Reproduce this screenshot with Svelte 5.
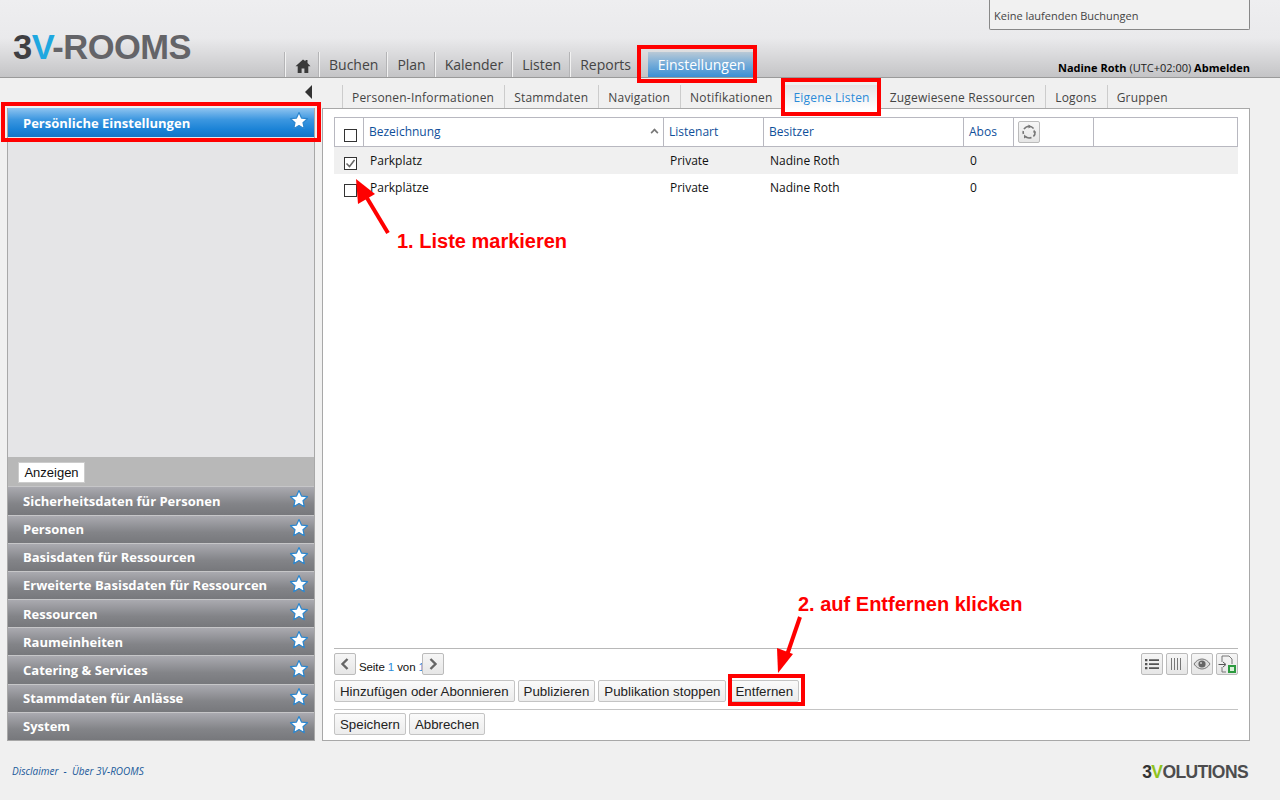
<script>
  const navItems = ['Buchen', 'Plan', 'Kalender', 'Listen', 'Reports'];
  const tabs = ['Personen-Informationen', 'Stammdaten', 'Navigation', 'Notifikationen', 'Eigene Listen', 'Zugewiesene Ressourcen', 'Logons', 'Gruppen'];
  const groups = ['Sicherheitsdaten für Personen', 'Personen', 'Basisdaten für Ressourcen', 'Erweiterte Basisdaten für Ressourcen', 'Ressourcen', 'Raumeinheiten', 'Catering & Services', 'Stammdaten für Anlässe', 'System'];
  const rows = [
    { name: 'Parkplatz', type: 'Private', owner: 'Nadine Roth', subs: 0, checked: true },
    { name: 'Parkplätze', type: 'Private', owner: 'Nadine Roth', subs: 0, checked: false }
  ];
  const actions = ['Hinzufügen oder Abonnieren', 'Publizieren', 'Publikation stoppen', 'Entfernen'];
</script>

{#snippet star()}
  <svg class="star" width="20" height="20" viewBox="0 0 20 20">
    <path d="M10 1.5l2.5 5.6 6 .6-4.5 4 1.3 6L10 14.6l-5.3 3.1 1.3-6-4.5-4 6-.6z" fill="#fff" stroke="#2a86cf" stroke-width="1.2" stroke-linejoin="round" />
  </svg>
{/snippet}

<div class="page">
  <header>
    <div class="running">Keine laufenden Buchungen</div>
    <div class="bar">
      <div class="logo"><span class="logo-mark">3<span class="logo-v">V</span></span>-ROOMS</div>
      <nav>
        <span class="nav-item home">
          <svg width="16" height="14" viewBox="0 0 16 14"><path d="M8 0.5L0.5 7.2h2.2V14h3.9V9.5h2.8V14h3.9V7.2h2.2L12.5 4V1h-2v1.2z" fill="#3a3a3a" /></svg>
        </span>
        {#each navItems as item}
          <span class="nav-item">{item}</span>
        {/each}
        <span class="nav-active">Einstellungen</span>
      </nav>
      <div class="user"><b>Nadine Roth</b> (UTC+02:00) <b>Abmelden</b></div>
    </div>
  </header>

  <main>
    <aside>
      <div class="collapse"><span class="collapse-arrow"></span></div>
      <div class="side-panel">
        <div class="side-active">Persönliche Einstellungen {@render star()}</div>
        <div class="side-fill"></div>
        <div class="side-show"><button class="show-btn">Anzeigen</button></div>
        {#each groups as group}
          <div class="side-group">{group} {@render star()}</div>
        {/each}
      </div>
    </aside>

    <section>
      <div class="tabs">
        {#each tabs as tab}
          <span class="tab" class:active={tab === 'Eigene Listen'}>{tab}</span>
        {/each}
      </div>
      <div class="panel">
        <div class="table">
          <div class="row head">
            <div class="cell check"><span class="box"></span></div>
            <div class="cell name">Bezeichnung <span class="sort"></span></div>
            <div class="cell type">Listenart</div>
            <div class="cell owner">Besitzer</div>
            <div class="cell subs">Abos</div>
            <div class="cell tool">
              <span class="icon-btn refresh">
                <svg width="16" height="16" viewBox="0 0 16 16" fill="none" stroke="#777" stroke-width="1.6">
                  <path d="M3 5.2A6 6 0 0 1 8 2.2a6 6 0 0 1 4.6 2.2M14 7.5a6 6 0 0 1-1.6 5M10.5 13.4a6 6 0 0 1-6.5-1.2M2.4 10A6 6 0 0 1 2.3 7" />
                  <path d="M7.5 0.5l3 2-3 2zM13 5.5l2 3h-3zM5.5 13l-2.5-2.5v4z" fill="#777" stroke="none" />
                </svg>
              </span>
            </div>
            <div class="cell rest"></div>
          </div>
          {#each rows as row, i}
            <div class="row body" class:alt={i === 0}>
              <div class="cell check">
                <span class="box">
                  {#if row.checked}
                    <svg width="11" height="11" viewBox="0 0 11 11"><path d="M1.5 5.5l3 3 5-6.5" fill="none" stroke="#666" stroke-width="1.5" /></svg>
                  {/if}
                </span>
              </div>
              <div class="cell name">{row.name}</div>
              <div class="cell type">{row.type}</div>
              <div class="cell owner">{row.owner}</div>
              <div class="cell subs">{row.subs}</div>
            </div>
          {/each}
        </div>

        <div class="foot">
          <div class="pager">
            <span class="icon-btn">
              <svg width="12" height="14" viewBox="0 0 12 14"><path d="M8.5 2L3.5 7l5 5" fill="none" stroke="#666" stroke-width="2.4" /></svg>
            </span>
            <span class="page-text">Seite <em>1</em> von <em>1</em></span>
            <span class="icon-btn">
              <svg width="12" height="14" viewBox="0 0 12 14"><path d="M3.5 2l5 5-5 5" fill="none" stroke="#666" stroke-width="2.4" /></svg>
            </span>
            <div class="views">
              <span class="icon-btn">
                <svg width="16" height="14" viewBox="0 0 16 14" fill="#555"><path d="M1 2h2.4v2.2H1zM5 2.3h10v1.6H5zM1 6h2.4v2.2H1zM5 6.300h10v1.600H5zM1 10h2.400v2.200H1zM5 10.300h10v1.600H5z" /></svg>
              </span>
              <span class="icon-btn">
                <svg width="14" height="14" viewBox="0 0 14 14" stroke="#777" stroke-width="1"><path d="M1.500 1v12M4.500 1v12M7.500 1v12M10.500 1v12" /></svg>
              </span>
              <span class="icon-btn">
                <svg width="18" height="12" viewBox="0 0 18 12"><path d="M1 6c2-3.200 5-5 8-5s6 1.800 8 5c-2 3.200-5 5-8 5S3 9.200 1 6z" fill="#ddd" stroke="#777" /><circle cx="9" cy="6" r="3.600" fill="#666" /><circle cx="8" cy="5" r="1" fill="#ccc" /></svg>
              </span>
              <span class="icon-btn">
                <svg width="20" height="20" viewBox="0 0 20 20" fill="none">
                  <path d="M5 8V2h7l3 3v5M5 13v5h4" stroke="#777" />
                  <path d="M1.500 10.500H8M6 8l3 2.500L6 13" stroke="#555" />
                  <rect x="11" y="11" width="8" height="8" fill="#2c9a3f" />
                  <rect x="13" y="13" width="4" height="4" fill="#d8f0d8" />
                </svg>
              </span>
            </div>
          </div>
          <div class="actions">
            {#each actions as action}
              <button>{action}</button>
            {/each}
          </div>
          <div class="save">
            <button>Speichern</button>
            <button>Abbrechen</button>
          </div>
        </div>
      </div>
    </section>
  </main>

  <footer>
    <div class="links">Disclaimer &nbsp;-&nbsp; Über 3V-ROOMS</div>
    <div class="maker"><span class="maker-3">3</span><span class="maker-v">V</span>OLUTIONS</div>
  </footer>

  <!-- Anleitung: rote Markierungen liegen über der Oberfläche -->
  <div class="mark mark-side"></div>
  <div class="mark mark-nav"></div>
  <div class="mark mark-tab"></div>
  <div class="mark mark-remove"></div>
  <div class="note note-1">1. Liste markieren</div>
  <div class="note note-2">2. auf Entfernen klicken</div>
  <svg class="arrows" width="1280" height="800" viewBox="0 0 1280 800">
    <path d="M388 233L364 193" stroke="#f00" stroke-width="4" />
    <path d="M356 179L375 194 358 204z" fill="#f00" />
    <path d="M800 617L787 655" stroke="#f00" stroke-width="4" />
    <path d="M778 673L777 648 793 654z" fill="#f00" />
  </svg>
</div>

<style>
  :global(body) {
    background: #f0f0f0;
    font-family: "Open Sans", "Noto Sans", sans-serif;
    font-size: 12px;
    color: #111;
  }

  .page {
    position: relative;
    width: 1280px;
    height: 800px;
    overflow: hidden;
  }

  header {
    height: 77px;
    border-bottom: 1px solid #9a9a9a;
    background: linear-gradient(#eeeef0 0, #eaeaec 38px, #c4c4c6 77px);
    display: flex;
    flex-direction: column;
  }

  .running {
    align-self: flex-end;
    width: 258px;
    height: 29px;
    margin-right: 30px;
    box-sizing: content-box;
    background: #f1f1f1;
    border: 1px solid #888;
    border-top: 0;
    border-radius: 0 0 2px 2px;
    padding: 0 0 0 4px;
    width: 255px;
    font-size: 11px;
    line-height: 32px;
    color: #444;
  }

  .bar {
    flex: 1;
    display: flex;
    align-items: flex-end;
    position: relative;
  }

  .logo {
    width: 272px;
    padding-left: 13px;
    align-self: flex-start;
    margin-top: -2px;
    font-family: "Liberation Sans", Arial, sans-serif;
    font-size: 34.500px;
    font-weight: 700;
    line-height: 38px;
    color: #646468;
    letter-spacing: -0.500px;
  }

  .logo-mark {
    color: #3f3f42;
  }

  .logo-v {
    color: #1fa8e0;
  }

  nav {
    display: flex;
    align-items: stretch;
    height: 25px;
  }

  .nav-item {
    padding: 0 9px 0 9px;
    font-size: 14px;
    line-height: 25px;
    color: #444;
    border-left: 1px solid #f2f2f2;
    box-shadow: -1px 0 0 #b4b4b6;
  }

  .nav-item.home {
    width: 16px;
    display: flex;
    align-items: center;
    justify-content: center;
    padding: 2px 8px 0 9px;
  }

  .nav-active {
    margin-left: 8px;
    width: 107px;
    text-align: center;
    font-size: 14px;
    line-height: 25px;
    color: #fff;
    background: linear-gradient(#b9c9d6, #7aaed9 45%, #3b8fd4);
  }

  .user {
    margin-left: auto;
    margin-right: 30px;
    font-size: 11px;
    line-height: 15px;
    padding-bottom: 2px;
    color: #222;
  }

  .user b {
    color: #000;
  }

  main {
    display: flex;
    height: 663px;
    padding-left: 7px;
    gap: 7px;
  }

  aside {
    width: 308px;
    display: flex;
    flex-direction: column;
  }

  .collapse {
    height: 30px;
    display: flex;
    justify-content: flex-end;
    padding-top: 7px;
    box-sizing: border-box;
  }

  .collapse-arrow {
    width: 0;
    height: 0;
    margin-right: 3px;
    border-style: solid;
    border-width: 7px 7px 7px 0;
    border-color: transparent #333 transparent transparent;
  }

  .side-panel {
    flex: 1;
    display: flex;
    flex-direction: column;
    border: 1px solid #a8a8a8;
    border-top: 0;
    background: #e5e5e7;
  }

  .side-active, .side-group {
    display: flex;
    align-items: center;
    justify-content: space-between;
    padding: 0 5px 0 15px;
    color: #fff;
    font-size: 13px;
    font-weight: 700;
    box-sizing: border-box;
  }

  .side-active {
    height: 29px;
    background: linear-gradient(#8fc4f0, #3c97e0 40%, #1a82d6 75%, #1274c4);
  }

  .side-fill {
    flex: 1;
  }

  .side-show {
    height: 29px;
    background: #b8b8b8;
    padding: 5px 10px;
    box-sizing: border-box;
  }

  .show-btn {
    height: 21px;
    width: 67px;
    padding: 0;
    border: 1px solid #ccc;
    border-radius: 0;
    background: #fff;
    font-family: "Liberation Sans", Arial, sans-serif;
    font-size: 13px;
    color: #111;
  }

  .side-group {
    height: 28.200px;
    border-top: 1px solid #c6c6c8;
    background: linear-gradient(#aaaab0, #838488 60%, #77787c);
  }

  .star {
    flex: none;
    margin-bottom: 3px;
  }

  section {
    width: 928px;
    display: flex;
    flex-direction: column;
  }

  .tabs {
    height: 30px;
    display: flex;
    align-items: flex-end;
    padding-left: 20px;
    box-sizing: border-box;
  }

  .tab {
    height: 23px;
    padding: 0 10px 0 9px;
    font-size: 12px;
    line-height: 26px;
    letter-spacing: 0.200px;
    color: #444;
    border-left: 1px solid #ccc;
  }

  .tab.active {
    margin-left: 2px;
    background: linear-gradient(#e4e4e6, #fff);
    color: #2b8bd8;
    position: relative;
    height: 24px;
    margin-bottom: -1px;
    border-left: 0;
  }

  .panel {
    flex: 1;
    display: flex;
    flex-direction: column;
    justify-content: space-between;
    background: #fff;
    border: 1px solid #a8a8a8;
    padding: 8px 11px 5px;
  }

  .row {
    display: flex;
  }

  .row.head {
    height: 30px;
    box-sizing: border-box;
    border: 1px solid #b8b8c0;
    border-right: 1px solid #b8b8c0;
    color: #0f4f9a;
  }

  .row.head .cell {
    border-right: 1px solid #b8b8c0;
    line-height: 28px;
  }

  .row.head .cell.rest {
    border-right: 0;
  }

  .row.body {
    height: 27px;
    line-height: 28px;
  }

  .row.alt {
    background: #f0f0f0;
  }

  .cell {
    box-sizing: border-box;
    padding-left: 5px;
  }

  .row.body .cell {
    padding-left: 6px;
  }

  .row.head .check, .row.body .check {
    width: 30px;
    padding: 0 0 0 9px;
    display: flex;
    align-items: flex-end;
  }

  .row.head .check {
    width: 29px;
    padding-left: 9px;
    padding-bottom: 4px;
  }

  .row.body .check {
    padding-left: 10px;
    padding-bottom: 4px;
  }

  .row.head .name { width: 300px; position: relative; }
  .row.body .name { width: 300px; }
  .type { width: 100px; }
  .owner { width: 200px; }
  .subs { width: 50px; }
  .tool { width: 80px; }
  .rest { flex: 1; }

  .row.head .tool {
    padding-left: 4px;
    padding-top: 3px;
    line-height: 0;
  }

  .box {
    display: flex;
    align-items: center;
    justify-content: center;
    width: 11px;
    height: 11px;
    background: #fff;
    border: 1px solid #333;
  }

  .sort {
    position: absolute;
    right: 5px;
    top: 11px;
    width: 5px;
    height: 5px;
    border-left: 2px solid #777;
    border-top: 2px solid #777;
    transform: rotate(45deg) scale(0.8);
  }

  .icon-btn {
    display: inline-flex;
    align-items: center;
    justify-content: center;
    box-sizing: border-box;
    width: 22px;
    height: 22px;
    border: 1px solid #bbb;
    border-radius: 2px;
    background: linear-gradient(#f6f6f6, #e6e6e6);
    overflow: hidden;
  }

  .foot {
    border-top: 1px solid #b8b8b8;
    display: flex;
    flex-direction: column;
  }

  .pager {
    display: flex;
    align-items: flex-end;
    padding-top: 4px;
    height: 22px;
    box-sizing: content-box;
  }

  .page-text {
    padding: 0 3px;
    margin-bottom: -1px;
    font-family: "Liberation Sans", Arial, sans-serif;
    font-size: 11.500px;
    line-height: 18px;
    letter-spacing: -0.100px;
    width: 66px;
    box-sizing: border-box;
    white-space: nowrap;
  }

  .page-text em {
    font-style: normal;
    color: #2b8bd8;
  }

  .views {
    margin-left: auto;
    display: flex;
    gap: 3px;
  }

  .actions {
    display: flex;
    gap: 3px;
    margin-top: 5px;
    padding-bottom: 7px;
    border-bottom: 1px solid #c4c4c4;
  }

  .save {
    display: flex;
    gap: 3px;
    margin-top: 3px;
  }

  button {
    height: 22px;
    padding: 0 5px;
    border: 1px solid #c4c4c4;
    border-radius: 2px;
    background: linear-gradient(#fafafa, #ececec);
    font-family: "Liberation Sans", Arial, sans-serif;
    font-size: 13.300px;
    color: #222;
    white-space: nowrap;
  }

  footer {
    display: flex;
    justify-content: space-between;
    align-items: center;
    height: 60px;
    padding: 0 32px 0 12px;
  }

  .links {
    font-size: 10px;
    font-style: italic;
    color: #1a5a9a;
  }

  .maker {
    font-family: "Liberation Sans", Arial, sans-serif;
    font-size: 17.500px;
    font-weight: 700;
    letter-spacing: -0.600px;
    color: #4c4c4e;
    margin-top: 2px;
  }

  .maker-3 {
    color: #333;
  }

  .maker-v {
    color: #8fc31f;
  }

  .mark {
    position: absolute;
    box-sizing: border-box;
    border: 4px solid #f00;
  }

  .mark-side { left: 1px; top: 102px; width: 320px; height: 40px; }
  .mark-nav { left: 637px; top: 45px; width: 120px; height: 38px; }
  .mark-tab { left: 781px; top: 78px; width: 100px; height: 38px; }
  .mark-remove { left: 728px; top: 674px; width: 77px; height: 32px; }

  .note {
    position: absolute;
    font-family: "Liberation Sans", Arial, sans-serif;
    font-size: 20px;
    font-weight: 700;
    line-height: 24px;
    color: #f00;
    white-space: nowrap;
  }

  .note-1 { left: 397px; top: 229px; }
  .note-2 { left: 798px; top: 592px; }

  .arrows {
    position: absolute;
    left: 0;
    top: 0;
    pointer-events: none;
  }
</style>
